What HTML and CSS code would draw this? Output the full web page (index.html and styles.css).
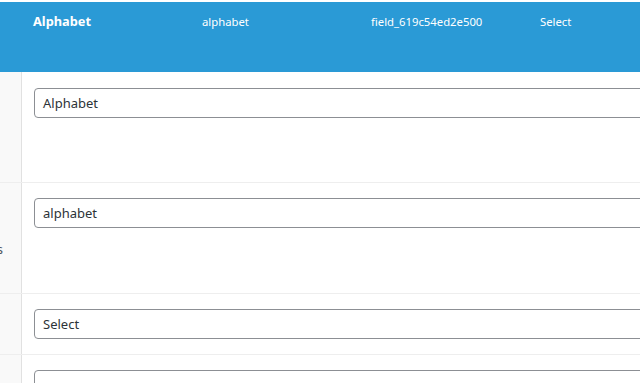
FILE: index.html
```html
<!DOCTYPE html>
<html>
<head>
<meta charset="utf-8">
<link rel="stylesheet" href="styles.css">
</head>
<body>
<div class="page">
  <div class="header">
    <div class="hcol hcol-title">Alphabet</div>
    <div class="hcol">alphabet</div>
    <div class="hcol">field_619c54ed2e500</div>
    <div class="hcol">Select</div>
  </div>
  <div class="rows">
    <div class="row row-tall row-first">
      <div class="label"></div>
      <div class="cell"><div class="input">Alphabet</div></div>
    </div>
    <div class="row row-tall">
      <div class="label"><span class="label-text">Instructions</span></div>
      <div class="cell"><div class="input">alphabet</div></div>
    </div>
    <div class="row row-short">
      <div class="label"></div>
      <div class="cell"><div class="input">Select</div></div>
    </div>
    <div class="row row-short">
      <div class="label"></div>
      <div class="cell"><div class="input"></div></div>
    </div>
  </div>
</div>
</body>
</html>
```

FILE: styles.css
```css
html, body {
  margin: 0;
  padding: 0;
  background: #fff;
  overflow: hidden;
}
body {
  font-family: "Noto Sans", "Open Sans", sans-serif;
  width: 640px;
  height: 383px;
}
.page {
  padding-top: 2px;
}
.header {
  background: #2a9ad6;
  height: 70px;
  display: flex;
  padding-left: 33px;
  color: #fff;
  box-sizing: border-box;
  padding-top: 10px;
}
.hcol {
  width: 169px;
  flex: 0 0 169px;
  font-size: 11.3px;
  line-height: 18px;
  padding-top: 1px;
  white-space: nowrap;
}
.hcol-title {
  font-size: 12.8px;
  font-weight: 700;
  padding-top: 0;
}
.rows {
  display: flex;
  flex-direction: column;
}
.row {
  display: grid;
  grid-template-columns: 22px 1fr;
  border-top: 1px solid #eeeeee;
  box-sizing: border-box;
}
.row-first {
  border-top: none;
}
.row-tall {
  height: 111px;
}
.row-first.row-tall {
  height: 110px;
}
.row-short {
  height: 61px;
}
.label {
  background: #f9f9f9;
  border-right: 1px solid #e1e1e1;
  overflow: hidden;
  display: flex;
  justify-content: flex-end;
  padding-top: 57px;
  box-sizing: border-box;
}
.label-text {
  font-size: 13px;
  line-height: 18px;
  color: #50575e;
  white-space: nowrap;
  margin-right: 18px;
  flex-shrink: 0;
}
.cell {
  padding: 15px 0 0 12px;
}
.row-first .cell {
  padding-top: 16px;
}
.input {
  width: 700px;
  height: 30px;
  box-sizing: border-box;
  border: 1px solid #8c8f94;
  border-radius: 4px;
  padding: 0 8px;
  font-size: 13px;
  line-height: 28px;
  color: #2c3338;
  white-space: nowrap;
}
```
